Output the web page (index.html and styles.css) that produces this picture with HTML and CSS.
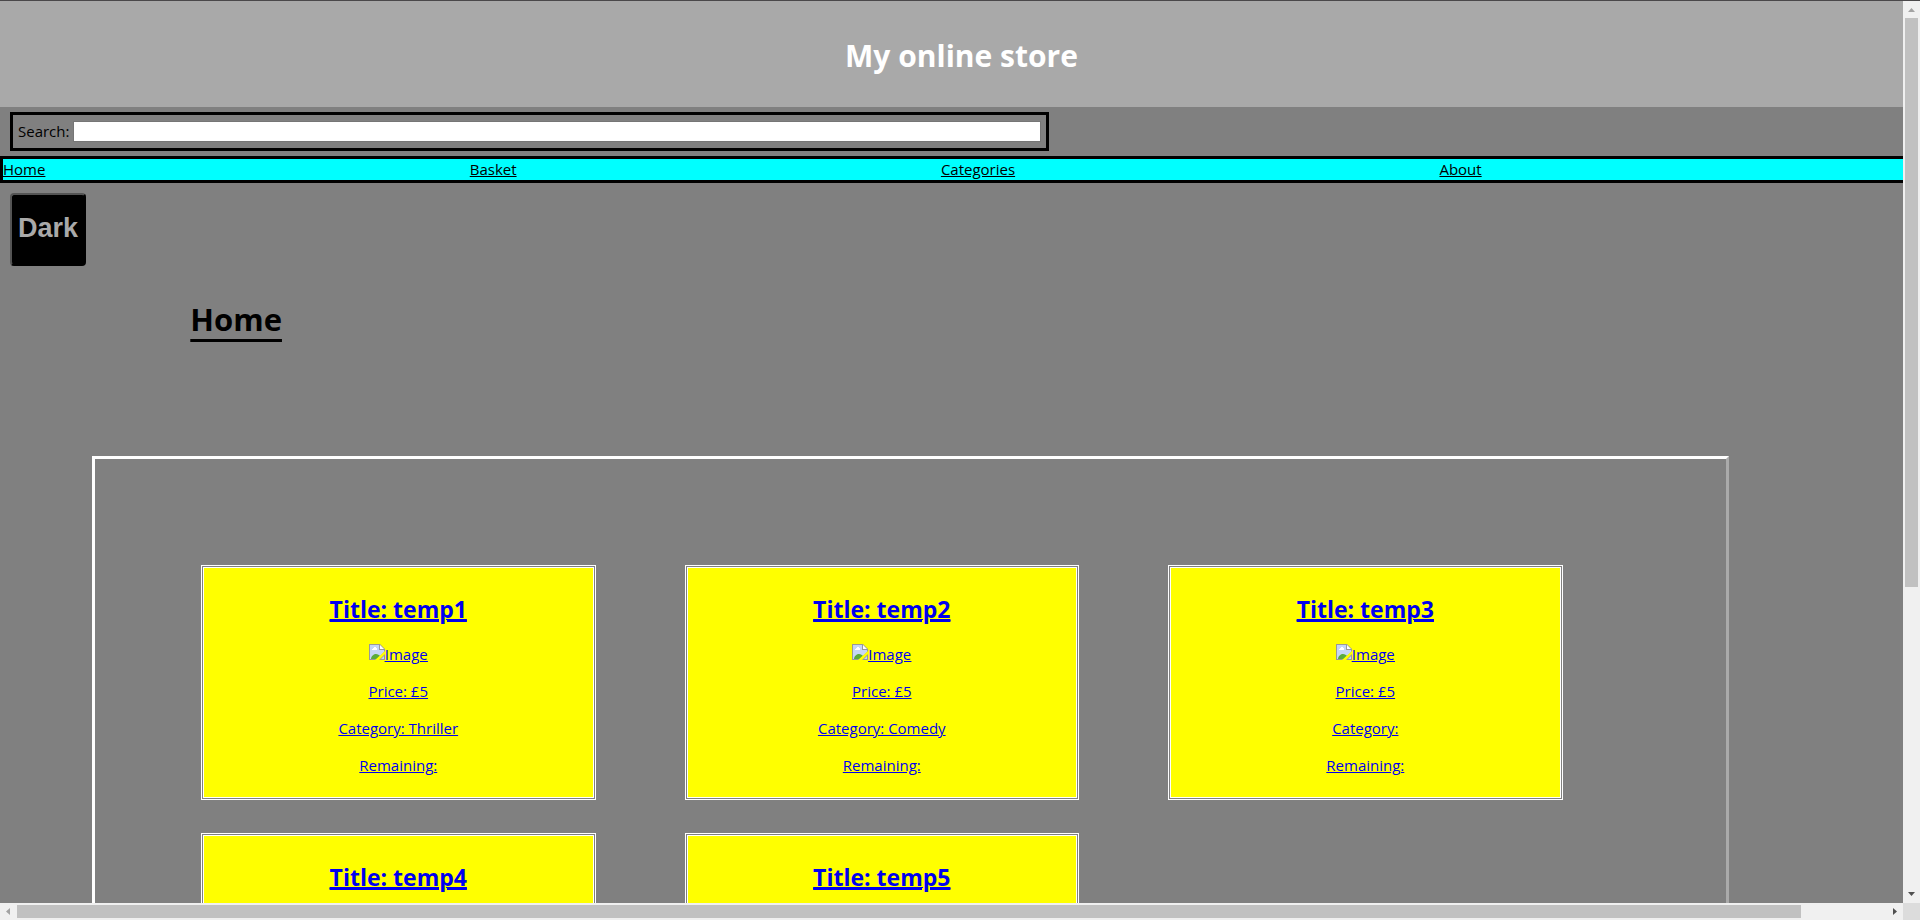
FILE: index.html
```html
<!DOCTYPE html>
<html lang="en">
<head>
<meta charset="utf-8">
<title>My online store</title>
<link rel="stylesheet" href="styles.css">
</head>
<body class="window">
<svg class="defs" width="0" height="0" aria-hidden="true">
  <symbol id="broken" viewBox="0 0 16 16">
    <path d="M0 0h11l5 5v3L8 16H0z" fill="#999"/>
    <path d="M1 1h9v5h5v2l-7 7H1z" fill="#c6d6f5"/>
    <path d="M11 1l4 4h-4z" fill="#fff"/>
    <path d="M3 6V5h1V4h1V3h2v1h1v2z" fill="#fff"/>
    <path d="M2 15c0-3 3-5 5-5 2 0 3 1 4 2l-3 3z" fill="#5aab3c"/>
    <path d="M16 7v3l-6 6H6z" fill="#ff0"/>
    <path d="M16 10v6h-6z" fill="#999"/>
    <path d="M15 12v3h-3z" fill="#c6d6f5"/>
  </symbol>
</svg>
<div class="view">
  <header class="banner"><h1 class="banner-title">My online store</h1></header>
  <form class="search">
    <label for="q">Search:</label>
    <input class="search-box" id="q" type="text">
  </form>
  <nav class="nav">
    <ul class="nav-list">
      <li><a href="#">Home</a></li>
      <li><a href="#">Basket</a></li>
      <li><a href="#">Categories</a></li>
      <li><a href="#">About</a></li>
    </ul>
  </nav>
  <button class="theme" type="button">Dark</button>
  <main>
    <h1 class="page-title">Home</h1>
    <div class="products">
      <a class="card" href="#">
        <h2>Title: temp1</h2>
        <p class="pic"><svg class="icon" aria-hidden="true"><use href="#broken"/></svg><span>Image</span></p>
        <p>Price: £5</p><p>Category: Thriller</p><p>Remaining:</p>
      </a>
      <a class="card" href="#">
        <h2>Title: temp2</h2>
        <p class="pic"><svg class="icon" aria-hidden="true"><use href="#broken"/></svg><span>Image</span></p>
        <p>Price: £5</p><p>Category: Comedy</p><p>Remaining:</p>
      </a>
      <a class="card" href="#">
        <h2>Title: temp3</h2>
        <p class="pic"><svg class="icon" aria-hidden="true"><use href="#broken"/></svg><span>Image</span></p>
        <p>Price: £5</p><p>Category:</p><p>Remaining:</p>
      </a>
      <a class="card" href="#"><h2>Title: temp4</h2></a>
      <a class="card" href="#"><h2>Title: temp5</h2></a>
    </div>
  </main>
</div>
<div class="bar bar-v" aria-hidden="true">
  <svg class="arrow" viewBox="0 0 17 17"><path d="M5 11l3.500-4 3.500 4z" fill="#a3a3a3"/></svg>
  <div class="thumb thumb-v"></div><div class="rest-v"></div>
  <svg class="arrow" viewBox="0 0 17 17"><path d="M5 6h7l-3.500 4z" fill="#505050"/></svg>
</div>
<div class="bar bar-h" aria-hidden="true">
  <svg class="arrow" viewBox="0 0 17 17"><path d="M10 5v7L6 8.500z" fill="#a3a3a3"/></svg>
  <div class="thumb thumb-h"></div><div class="rest-h"></div>
  <svg class="arrow" viewBox="0 0 17 17"><path d="M7 5v7l4-3.500z" fill="#505050"/></svg>
</div>
<div class="corner"></div>
</body>
</html>
```
FILE: styles.css
```css
.window {
  margin: 0;
  height: 100vh;
  box-sizing: border-box;
  border-top: 1px solid #4a484a;
  display: grid;
  grid-template: minmax(0, 1fr) 17px / minmax(0, 1fr) 17px;
  overflow: hidden;
  background: gray;
  color: #000;
  font: 15px/21px "Segoe UI", "Open Sans", "Noto Sans", sans-serif;
}
.defs { position: absolute; }
.view { overflow: auto; scrollbar-width: none; }

.banner {
  background: darkgray;
  color: #fff;
  text-align: center;
  padding: 34px 0 30px 20px;
}
.banner-title { margin: 0; font-size: 30px; line-height: 42px; }

.search {
  display: flex;
  align-items: center;
  gap: 4px;
  box-sizing: border-box;
  width: calc(55% - 8px);
  margin: 5px 10px;
  padding: 6px 5px;
  border: 3px solid #000;
}
.search-box {
  flex: 1;
  box-sizing: border-box;
  height: 21px;
  padding: 1px 2px;
  border: 1px solid #767676;
  background: #fff;
}

.nav { width: 100%; border: 3px solid #000; background: cyan; }
.nav-list { display: flex; margin: 0; padding: 0; list-style: none; }
.nav-list li { flex: 1 1 auto; }
.nav-list a { color: #000; }

.theme {
  display: block;
  margin: 10px;
  padding: 20px 6px 22px;
  border: 2px outset #000;
  border-radius: 4px;
  background: #000;
  color: darkgray;
  font: bold 27px/27px "Liberation Sans", Arial, sans-serif;
}

.page-title {
  margin: 32px 10% 115px;
  font-size: 31px;
  line-height: 43px;
  text-decoration: underline 3px;
  text-underline-offset: 8px;
}

.products {
  display: grid;
  grid-template-columns: repeat(3, minmax(0, 1fr));
  gap: 33px 89px;
  box-sizing: border-box;
  width: 86%;
  margin-left: 92px;
  padding: 106px 163px 106px 106px;
  border: 3px solid;
  border-color: #fff #aaa #aaa #fff;
}
.card {
  min-height: 220px;
  padding: 4px 4px 5px;
  border: 3px double #fff;
  background: #ff0 padding-box;
  color: #00e;
  text-align: center;
}
.card h2 { margin: 21px 0 19px; font-size: 23px; line-height: 32px; text-decoration: underline 2px; }
.card p { margin: 16px 0; }
.card .pic { display: flex; justify-content: center; margin-top: 20px; }
.card h2 + .pic { margin-top: 19px; }
.pic span { text-decoration: underline; }
.icon { width: 16px; height: 16px; }

.bar { display: flex; box-sizing: border-box; background: #f0f0f0; }
.bar-v { flex-direction: column; }
.arrow { flex: none; width: 17px; height: 17px; }
.thumb { background: #c1c1c1; }
.thumb-v { flex: 569; margin: 0 2px; }
.rest-v { flex: 299; }
.thumb-h { flex: 1784; margin: 2px 0; }
.rest-h { flex: 85; }
.corner { background: #dcdcdc; }
```
